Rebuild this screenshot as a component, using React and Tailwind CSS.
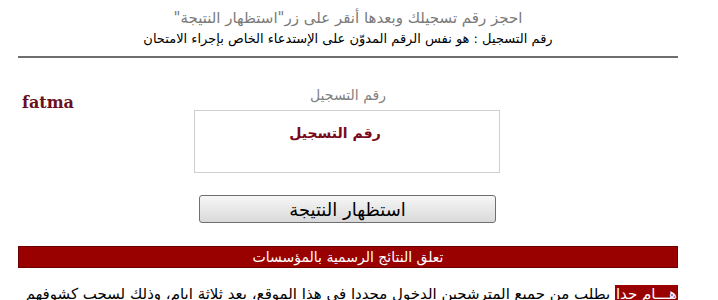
export default function App() {
  return (
    <div className="w-[718px] h-[300px] overflow-hidden bg-white" style={{ fontFamily: '"DejaVu Sans", Tahoma, sans-serif' }}>
      <div dir="rtl" className="ml-[18px] w-[660px]">
        <div className="pt-[7px] text-center text-[15px] leading-[22px] text-[#7a7a7a]">
          احجز رقم تسجيلك وبعدها أنقر على زر"استظهار النتيجة"
        </div>
        <div className="text-center text-[13px] leading-[20px] text-black">
          رقم التسجيل : هو نفس الرقم المدوّن على الإستدعاء الخاص بإجراء الامتحان
        </div>
        <div className="mt-[7px] h-[2px] bg-[#6e6e6e]" />
        <div className="relative pt-[26px]">
          <div className="absolute left-[4px] top-[33px] text-[16px] font-bold text-[#6b1020]" dir="ltr" style={{ fontFamily: '"DejaVu Serif", serif' }}>
            fatma
          </div>
          <div className="text-center text-[14px] leading-[22px] text-[#808080]">رقم التسجيل</div>
          <div className="mt-[4px] mr-[178px] w-[306px] h-[63px] border border-[#cfcfcf] flex justify-center pt-[12px]">
            <span className="pr-[24px] text-[14px] font-bold text-[#7a0a18]">رقم التسجيل</span>
          </div>
          <div className="mt-[22px] mr-[182px] w-[297px] h-[28px] rounded-[3px] border border-[#6f6f6f] bg-gradient-to-b from-[#f7f7f7] to-[#d9d9d9] flex items-center justify-center text-[18px] text-black">
            استظهار النتيجة
          </div>
        </div>
        <div className="mt-[23px] h-[22px] bg-[#990000] border border-[#6a0000] flex items-center justify-center text-[14px] text-white">
          تعلق النتائج الرسمية بالمؤسسات
        </div>
        <div className="mt-[15px] text-right text-[15px] leading-[22px] text-black whitespace-nowrap">
          <span className="bg-[#990000] text-white underline px-[1px]">هـــام جدا</span> يطلب من جميع المترشحين الدخول مجددا في هذا الموقع، بعد ثلاثة ايام، وذلك لسحب كشوفهم
        </div>
      </div>
    </div>
  );
}
